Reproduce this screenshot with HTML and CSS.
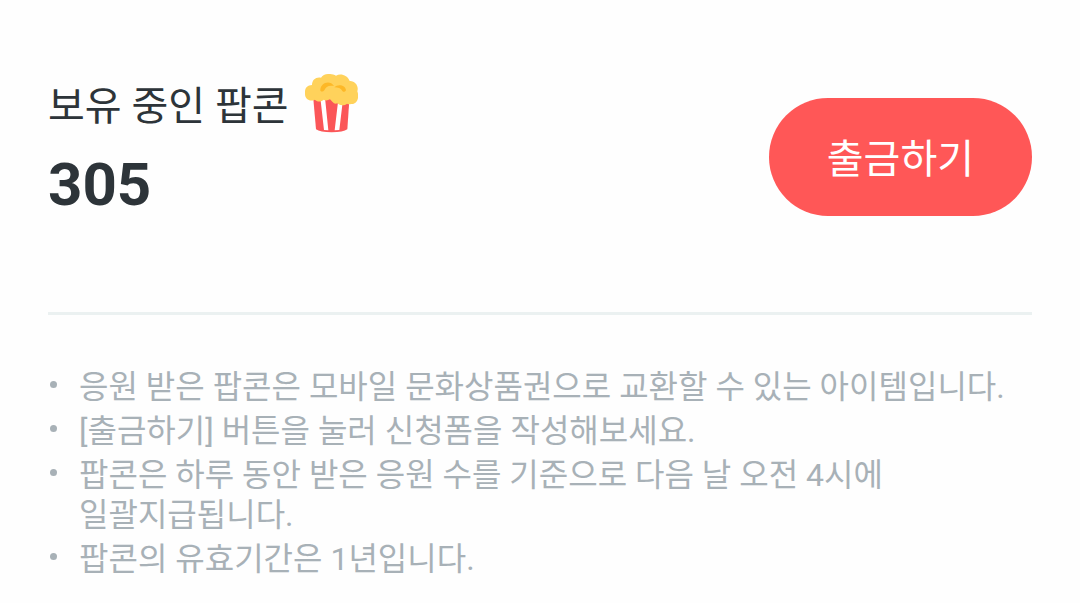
FILE: index.html
```html
<!DOCTYPE html>
<html lang="ko">
<head>
    <meta charset="UTF-8">
    <meta name="viewport" content="width=device-width, initial-scale=1.0">
    <title>보유 중인 팝콘</title>
    <link rel="stylesheet" href="styles.css">
</head>
<body>
    <main class="popcorn">
        <section class="summary">
            <div class="balance">
                <h1 class="balance-title">
                    <span>보유 중인 팝콘</span>
                    <svg class="popcorn-icon" viewBox="45 41 159 177" aria-hidden="true">
                        <path fill="#fb5658" d="M69 105 H179 L172 207 Q160 216 125 216 Q90 216 78 207 Z"/>
                        <path fill="#fff" d="M91 112 H105 L115 210 L102 209 Z M144 125 H158 L148 209 L134 210 Z"/>
                        <path fill="#ffd25b" d="M66 74 C66 58 78 49 93 52 C100 39 124 38 138 46 C152 38 173 45 179 62 C196 61 207 78 202 93 C209 112 201 132 183 131 Q177 133 171 130 C163 137 149 136 142 129 Q134 133 127 124 L120 117 C114 120 106 122 101 118 C94 125 80 125 75 118 C60 125 45 117 45 101 C43 86 50 75 66 74 Z"/>
                        <path fill="#fdb827" d="M91 91 C90 67 120 57 132 77 C116 74 107 79 103 90 Q97 97 91 91 Z M133 81 C143 70 167 74 168 90 Q163 98 157 92 C153 84 144 81 133 81 Z"/>
                    </svg>
                </h1>
                <p class="balance-count">305</p>
            </div>
            <button type="button" class="withdraw-button">출금하기</button>
        </section>

        <ul class="notice">
            <li>응원 받은 팝콘은 모바일 문화상품권으로 교환할 수 있는 아이템입니다.</li>
            <li>[출금하기] 버튼을 눌러 신청폼을 작성해보세요.</li>
            <li>팝콘은 하루 동안 받은 응원 수를 기준으로 다음 날 오전 4시에 일괄지급됩니다.</li>
            <li>팝콘의 유효기간은 1년입니다.</li>
        </ul>
    </main>
</body>
</html>
```
FILE: styles.css
```css
* {
    box-sizing: border-box;
    margin: 0;
    padding: 0;
}
body {
    font-family: Roboto, "Noto Sans CJK KR", sans-serif;
    background-color: #fefefe;
    color: #2d3439;
    word-break: keep-all;
}
.popcorn {
    padding: 72px 48px 24px;
}
.summary {
    display: flex;
    justify-content: space-between;
    align-items: flex-start;
    padding-bottom: 94px;
    border-bottom: 3px solid #ebf1f1;
}
.balance-title {
    display: flex;
    align-items: flex-start;
    gap: 16px;
    font-size: 40px;
    font-weight: 400;
    line-height: 70px;
}
.popcorn-icon {
    width: 53px;
    height: 59px;
    margin-top: 2px;
}
.balance-count {
    margin-top: 10px;
    font-size: 60px;
    font-weight: 700;
    line-height: 66px;
}
.withdraw-button {
    margin-top: 26px;
    padding: 6px 58px 0;
    border: none;
    border-radius: 60px;
    background-color: #ff5757;
    color: #fff;
    font-family: inherit;
    font-size: 40px;
    line-height: 112px;
    cursor: pointer;
}
.notice {
    display: flex;
    flex-direction: column;
    gap: 4px;
    margin-top: 52px;
    list-style: none;
    color: #a8b1b7;
    font-size: 32px;
    line-height: 40px;
}
.notice li {
    display: flex;
}
.notice li::before {
    content: "";
    flex: none;
    width: 7px;
    height: 7px;
    margin: 14px 22px 0 2px;
    border-radius: 50%;
    background-color: #a8b1b7;
}
```
